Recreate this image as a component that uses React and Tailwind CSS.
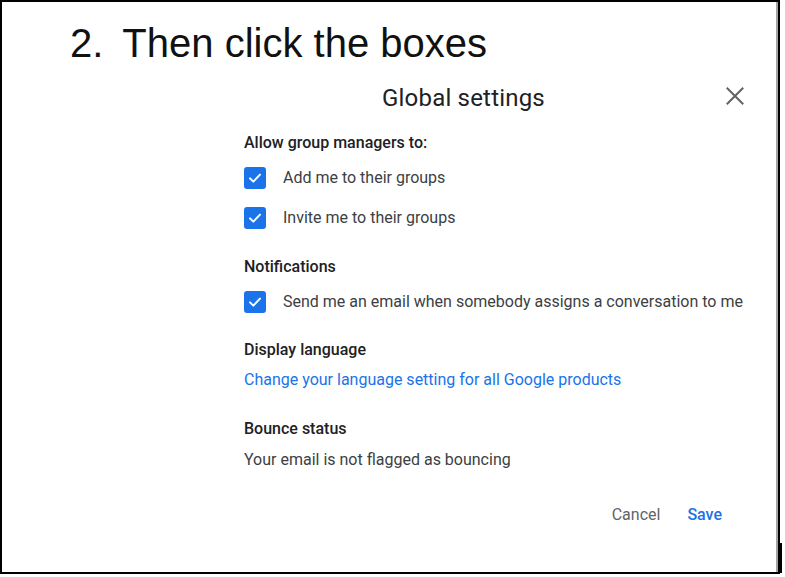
function CheckBox() {
  return (
    <div className="flex h-[22px] w-[22px] shrink-0 items-center justify-center rounded-[3px] bg-[#1a73e8]">
      <svg width="16" height="16" viewBox="0 0 24 24" fill="none">
        <path d="M4.5 12.5l5 5L19.5 7" stroke="white" strokeWidth="3" strokeLinecap="round" strokeLinejoin="round" />
      </svg>
    </div>
  );
}

function CheckRow({ label, className }) {
  return (
    <div className={"flex h-[22px] items-center gap-[17px] " + className}>
      <CheckBox />
      <span className="text-[16px] text-[#3c4043]">{label}</span>
    </div>
  );
}

export default function App() {
  return (
    <div className="relative h-[577px] w-[785px] bg-white">
      <div className="h-[574px] w-[780px] border-2 border-black bg-white shadow-[inset_-2px_0_0_#a3a3a3]">
        <div className="flex pl-[68px] pt-[21px] font-['Liberation_Sans',Arial,sans-serif] text-[40px] leading-[40px] text-[#111]">
          <span>2.</span>
          <span className="ml-[19px]">Then click the boxes</span>
        </div>

        <div className="ml-[242px] mr-[34px] flex flex-col font-['Roboto',sans-serif]">
          <div className="mt-[17px] flex h-[36px] items-center">
            <div className="ml-[138px] text-[24px] tracking-[0.2px] text-[#202124]">Global settings</div>
            <svg className="ml-auto mb-[5px]" width="18" height="18" viewBox="0 0 18 18" fill="none">
              <path d="M1.5 1.5l15 15M16.5 1.5l-15 15" stroke="#5f6368" strokeWidth="2" strokeLinecap="square" />
            </svg>
          </div>

          <div className="mt-[17px] flex h-[20px] items-center text-[16px] font-medium text-[#202124]">
            Allow group managers to:
          </div>
          <CheckRow className="mt-[14px]" label="Add me to their groups" />
          <CheckRow className="mt-[18px]" label="Invite me to their groups" />

          <div className="mt-[28px] flex h-[20px] items-center text-[16px] font-medium text-[#202124]">
            Notifications
          </div>
          <CheckRow className="mt-[14px]" label="Send me an email when somebody assigns a conversation to me" />

          <div className="mt-[27px] flex h-[20px] items-center text-[16px] font-medium text-[#202124]">
            Display language
          </div>
          <div className="mt-[10px] flex h-[20px] items-center text-[16px] text-[#1a73e8]">
            Change your language setting for all Google products
          </div>

          <div className="mt-[29px] flex h-[20px] items-center text-[16px] font-medium text-[#202124]">
            Bounce status
          </div>
          <div className="mt-[11px] flex h-[20px] items-center text-[16px] text-[#3c4043]">
            Your email is not flagged as bouncing
          </div>

          <div className="mt-[35px] flex h-[20px] items-center justify-end gap-[27px] pr-[22px] text-[16px]">
            <span className="text-[#5f6368]">Cancel</span>
            <span className="font-medium text-[#1a73e8]">Save</span>
          </div>
        </div>
      </div>
      <div className="absolute left-[780px] top-[543px] h-[30px] w-[2px] bg-black" />
    </div>
  );
}
